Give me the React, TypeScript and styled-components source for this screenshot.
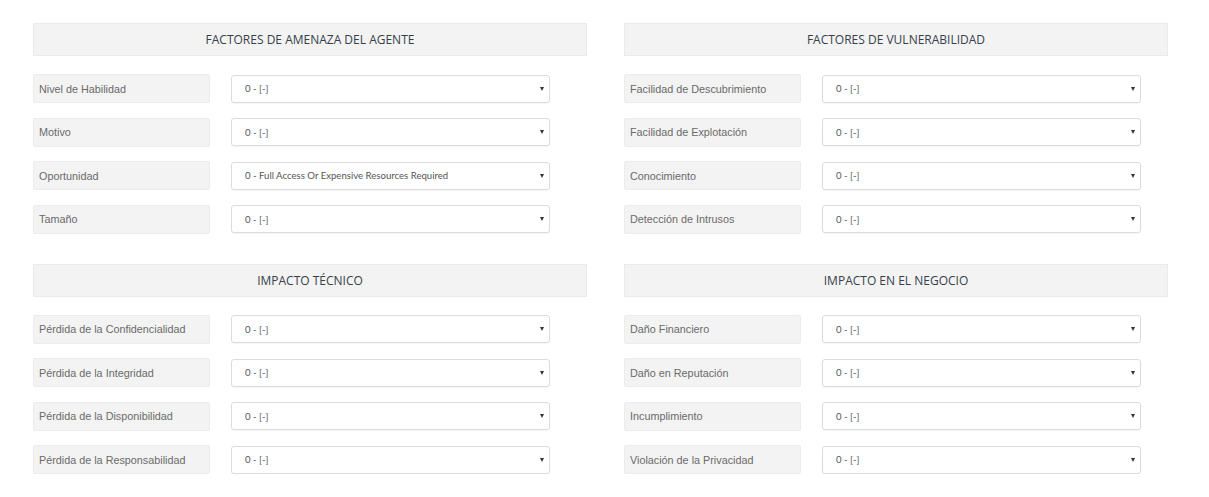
import React from "react";
import styled, { createGlobalStyle } from "styled-components";

const Global = createGlobalStyle`
  html, body { margin: 0; padding: 0; background: #ffffff; }
  * { box-sizing: border-box; }
`;

const Page = styled.div`
  display: grid;
  grid-template-columns: 554px 544px;
  column-gap: 37px;
  padding: 23px 0 0 33px;
  row-gap: 30px;
`;

const Section = styled.section`
  display: flex;
  flex-direction: column;
`;

const Header = styled.div`
  height: 33px;
  background: #f3f3f3;
  border: 1px solid #eaeaea;
  display: flex;
  align-items: center;
  justify-content: center;
  font-family: "Open Sans", "Liberation Sans", sans-serif;
  font-size: 12px;
  color: #36404a;
  margin-bottom: ${(p: { $gap: number }) => p.$gap}px;
`;

const Rows = styled.div`
  display: flex;
  flex-direction: column;
  gap: 14.5px;
`;

const Row = styled.div`
  display: flex;
  align-items: center;
  gap: 21px;
`;

const Label = styled.div`
  width: 177px;
  height: 29px;
  background: #f3f3f3;
  border: 1px solid #ececec;
  border-radius: 2px;
  display: flex;
  align-items: center;
  padding-left: 5px;
  font-family: "Liberation Sans", Arial, sans-serif;
  font-size: 10.8px;
  color: #6a6a6a;
`;

const SelectWrap = styled.div`
  position: relative;
  width: 319px;
  height: 28px;
`;

const Select = styled.select`
  appearance: none;
  -webkit-appearance: none;
  width: 100%;
  height: 100%;
  border: 1px solid #dcdcdc;
  border-radius: 3px;
  background: #fff;
  box-shadow: 0 1px 1px rgba(0, 0, 0, 0.04);
  padding: 0 20px 0 13px;
  font-family: Lato, "Open Sans", sans-serif;
  font-size: 9.6px;
  color: #555;
  outline: none;
`;

const Arrow = styled.span`
  position: absolute;
  right: 6px;
  top: 50%;
  transform: translateY(-50%);
  width: 0;
  height: 0;
  border-left: 2.5px solid transparent;
  border-right: 2.5px solid transparent;
  border-top: 4px solid #333;
  pointer-events: none;
`;

type Field = { label: string; value?: string };

const sections: { title: string; gap: number; fields: Field[] }[] = [
  {
    title: "FACTORES DE AMENAZA DEL AGENTE",
    gap: 18,
    fields: [
      { label: "Nivel de Habilidad" },
      { label: "Motivo" },
      { label: "Oportunidad", value: "0 - Full Access Or Expensive Resources Required" },
      { label: "Tamaño" },
    ],
  },
  {
    title: "FACTORES DE VULNERABILIDAD",
    gap: 18,
    fields: [
      { label: "Facilidad de Descubrimiento" },
      { label: "Facilidad de Explotación" },
      { label: "Conocimiento" },
      { label: "Detección de Intrusos" },
    ],
  },
  {
    title: "IMPACTO TÉCNICO",
    gap: 18,
    fields: [
      { label: "Pérdida de la Confidencialidad" },
      { label: "Pérdida de la Integridad" },
      { label: "Pérdida de la Disponibilidad" },
      { label: "Pérdida de la Responsabilidad" },
    ],
  },
  {
    title: "IMPACTO EN EL NEGOCIO",
    gap: 18,
    fields: [
      { label: "Daño Financiero" },
      { label: "Daño en Reputación" },
      { label: "Incumplimiento" },
      { label: "Violación de la Privacidad" },
    ],
  },
];

export default function App() {
  return (
    <>
      <Global />
      <Page>
        {sections.map((s) => (
          <Section key={s.title}>
            <Header $gap={s.gap}>{s.title}</Header>
            <Rows>
              {s.fields.map((f) => {
                const v = f.value ?? "0 - [-]";
                return (
                  <Row key={f.label}>
                    <Label>{f.label}</Label>
                    <SelectWrap>
                      <Select defaultValue={v}>
                        <option value={v}>{v}</option>
                      </Select>
                      <Arrow />
                    </SelectWrap>
                  </Row>
                );
              })}
            </Rows>
          </Section>
        ))}
      </Page>
    </>
  );
}
